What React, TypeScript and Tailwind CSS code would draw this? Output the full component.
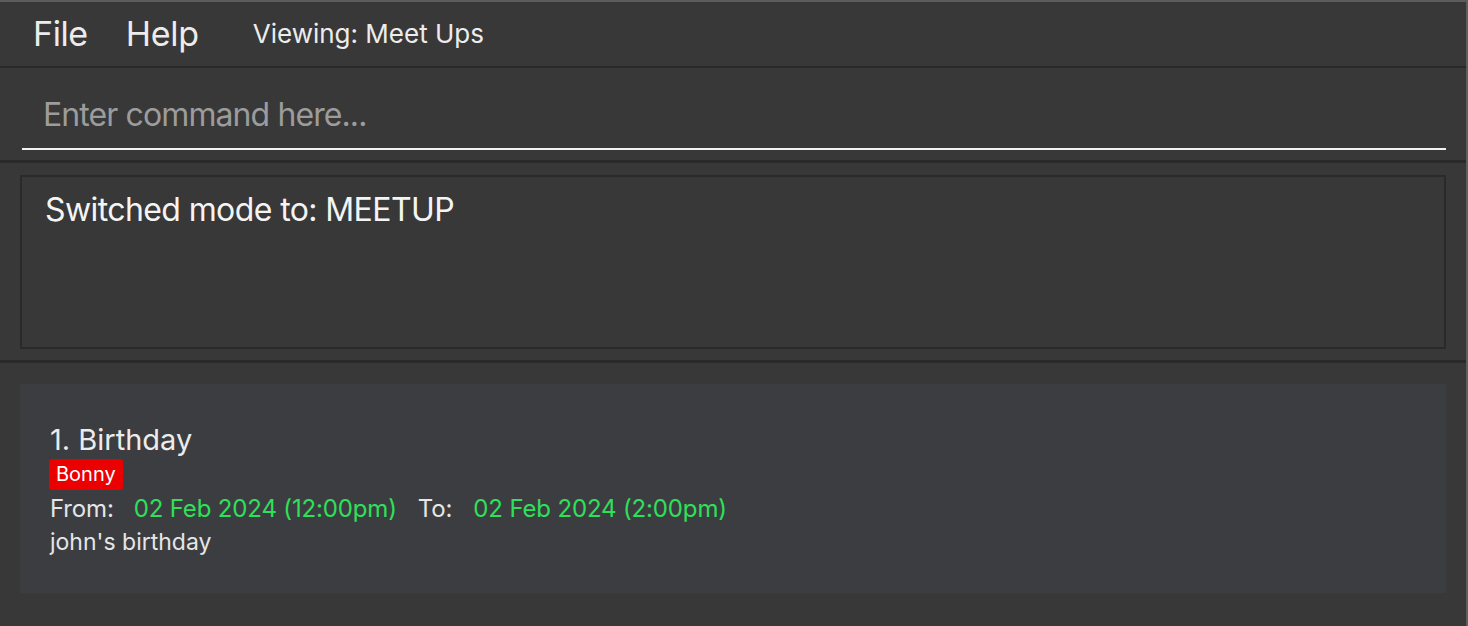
import React from "react";

export default function App() {
  const font = { fontFamily: "Inter, 'Noto Sans', sans-serif" };
  return (
    <div
      className="w-[1468px] h-[626px] bg-[#383838] flex flex-row overflow-hidden"
      style={font}
    >
      <div className="flex-1 flex flex-col border-t-2 border-[#5c5c5c]">
        {/* Menu bar */}
        <div className="h-[64px] flex items-center text-[#ececec] shrink-0">
          <span className="ml-[33px] text-[34px] leading-[40px] tracking-[-0.4px]">File</span>
          <span className="ml-[38px] text-[34px] leading-[40px] tracking-[-0.3px]">Help</span>
          <span className="ml-[54px] text-[26px] leading-[40px]">Viewing: Meet Ups</span>
        </div>
        <div className="h-[2px] bg-[#2a2a2a] shrink-0" />
        {/* Command box */}
        <div className="h-[92px] shrink-0 pl-[22px] pr-[20px] pt-[12px]">
          <div className="h-[70px] border-b-2 border-[#f2f2f2] flex items-center pl-[21px] pt-[2px]">
            <span className="text-[32px] text-[#9c9c9c] tracking-[-0.9px]">Enter command here...</span>
          </div>
        </div>
        <div className="h-[3px] bg-[#2a2a2a] shrink-0" />
        {/* Result display */}
        <div className="h-[197px] shrink-0 pl-[20px] pr-[20px] pt-[12px] pb-[11px]">
          <div className="h-full border-2 border-[#2a2a2a] pl-[23px] pt-[9px]">
            <span className="text-[32px] text-[#f4f4f4] tracking-[-0.6px]">Switched mode to: MEETUP</span>
          </div>
        </div>
        <div className="h-[3px] bg-[#2a2a2a] shrink-0" />
        {/* List */}
        <div className="flex-1 pl-[20px] pr-[20px] pt-[21px]">
          <div className="h-[209px] bg-[#3c3d40] pl-[30px] pt-[37px] flex flex-col">
            <div className="text-[29px] leading-[38px] text-[#ececec]">1. Birthday</div>
            <div className="flex">
              <span className="bg-[#ea0000] text-white text-[20px] leading-[31px] px-[7px] rounded-[3px] -ml-[1px]">Bonny</span>
            </div>
            <div className="flex text-[24px] leading-[36px] mt-[1px] tracking-[-0.15px]">
              <span className="text-[#e6e6e6]">From:</span>
              <span className="text-[#2ee05a] ml-[20px]">02 Feb 2024 (12:00pm)</span>
              <span className="text-[#e6e6e6] ml-[21px]">To:</span>
              <span className="text-[#2ee05a] ml-[21px]">02 Feb 2024 (2:00pm)</span>
            </div>
            <div className="text-[23px] leading-[30px] text-[#e6e6e6]">john's birthday</div>
          </div>
        </div>
      </div>
      <div className="w-[2px] bg-[#5e5e5e]" />
    </div>
  );
}
